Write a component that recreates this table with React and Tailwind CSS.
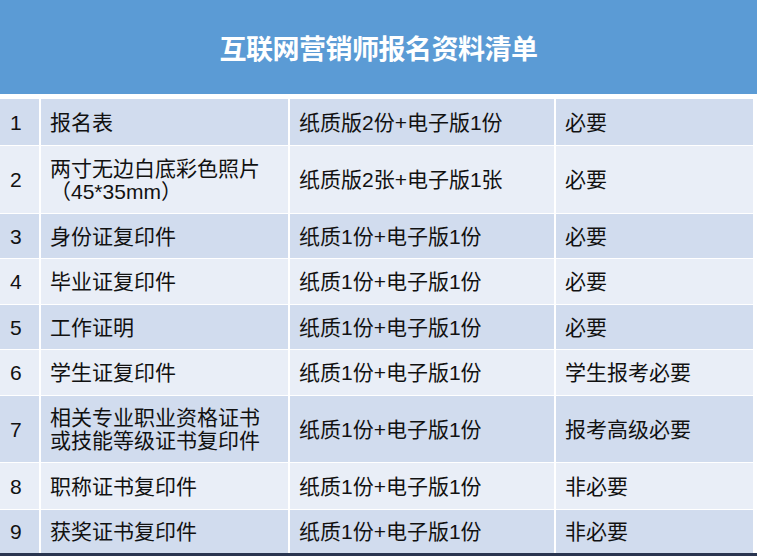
import React from 'react';

const rows = [
    { no: '1', name: ['报名表'], copies: '纸质版2份+电子版1份', need: '必要', h: 'h-[46px]' },
    { no: '2', name: ['两寸无边白底彩色照片', '（45*35mm）'], copies: '纸质版2张+电子版1张', need: '必要', h: 'h-[67px]' },
    { no: '3', name: ['身份证复印件'], copies: '纸质1份+电子版1份', need: '必要', h: 'h-[44px]' },
    { no: '4', name: ['毕业证复印件'], copies: '纸质1份+电子版1份', need: '必要', h: 'h-[45px]' },
    { no: '5', name: ['工作证明'], copies: '纸质1份+电子版1份', need: '必要', h: 'h-[44px]' },
    { no: '6', name: ['学生证复印件'], copies: '纸质1份+电子版1份', need: '学生报考必要', h: 'h-[45px]' },
    { no: '7', name: ['相关专业职业资格证书', '或技能等级证书复印件'], copies: '纸质1份+电子版1份', need: '报考高级必要', h: 'h-[66px]' },
    { no: '8', name: ['职称证书复印件'], copies: '纸质1份+电子版1份', need: '非必要', h: 'h-[46px]' },
    { no: '9', name: ['获奖证书复印件'], copies: '纸质1份+电子版1份', need: '非必要', h: 'h-[43px]' },
];

const App = () => {
    return (
        <div className="w-[760px] h-[556px] bg-white overflow-hidden font-['Liberation_Sans','Noto_Sans_CJK_SC',sans-serif]">
            <div className="w-[757px] flex flex-col">
                {/* Title bar */}
                <div className="h-[94px] bg-[#5b9bd5] flex items-center justify-center">
                    <h1 className="mt-[2px] text-[27px] font-bold text-white tracking-[-0.5px] font-['Noto_Sans_CJK_SC',sans-serif]">
                        互联网营销师报名资料清单
                    </h1>
                </div>

                {/* Table */}
                <div className="mt-[5px] flex flex-col gap-px bg-white">
                    {rows.map((row, i) => (
                        <div
                            key={row.no}
                            className={`grid grid-cols-[39px_247px_264px_197px] gap-x-[2px] ${row.h} text-[21px] leading-[23px] text-[#111]`}
                        >
                            {[row.no, row.name, row.copies, row.need].map((cell, j) => (
                                <div
                                    key={j}
                                    className={`flex flex-col justify-center ${j === 0 ? 'pl-[10px]' : 'pl-[9px]'} ${i % 2 === 0 ? 'bg-[#d1dcee]' : 'bg-[#e9eef7]'}`}
                                >
                                    {Array.isArray(cell)
                                        ? cell.map((line, k) => <span key={k} className="whitespace-nowrap">{line}</span>)
                                        : <span className="whitespace-nowrap">{cell}</span>}
                                </div>
                            ))}
                        </div>
                    ))}
                </div>
                <div className="h-[3px] bg-[#2a3550]"></div>
            </div>
        </div>
    );
};

export default App;
